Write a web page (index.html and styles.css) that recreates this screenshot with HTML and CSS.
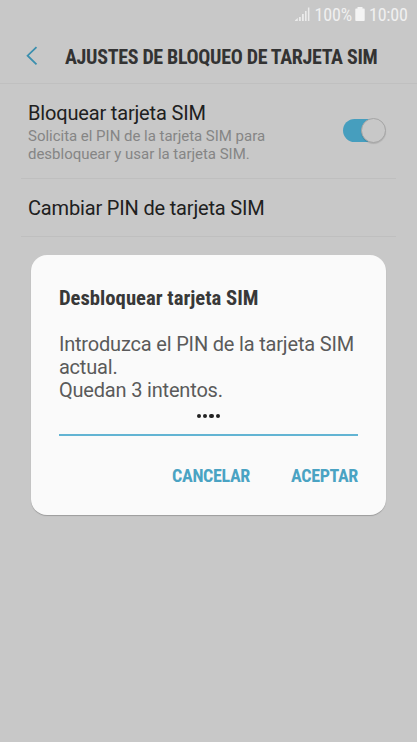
FILE: index.html
```html
<!DOCTYPE html>
<html lang="es">
<head>
<meta charset="utf-8">
<title>Ajustes de bloqueo de tarjeta SIM</title>
<link rel="stylesheet" href="styles.css">
</head>
<body>
<div class="screen">
  <div class="status">
    <svg class="signal" width="15" height="15" viewBox="0 0 15 15"><path d="M0 14V13.2L2.8 11V14ZM4 10h1.8v4H4zM7 7h1.8v7H7zM10 4h1.6v10H10zM12.9 .5h1.5V14h-1.5z"/></svg>
    <span class="percent">100%</span>
    <svg class="battery" width="10" height="14" viewBox="0 0 10 14"><path d="M2.5 0h5v1.5H9q.7 0 .7.7v11q0 .7-.7.7H1q-.7 0-.7-.7v-11q0-.7.7-.7h1.5z"/></svg>
    <span class="clock">10:00</span>
  </div>
  <header class="header">
    <svg class="back" width="12" height="20" viewBox="0 0 12 20"><path d="M10.5 1.2 1.6 9.7l8.9 8.7"/></svg>
    <h1 class="title">AJUSTES DE BLOQUEO DE TARJETA SIM</h1>
  </header>
  <main class="list">
    <div class="row lock-row">
      <div>
        <div class="name lock-name">Bloquear tarjeta SIM</div>
        <div class="summary">Solicita el PIN de la tarjeta SIM para<br>desbloquear y usar la tarjeta SIM.</div>
      </div>
      <div class="switch"><div class="thumb"></div></div>
    </div>
    <div class="row pin-row"><div class="name">Cambiar PIN de tarjeta SIM</div></div>
  </main>
  <section class="dialog">
    <h2 class="dialog-title">Desbloquear tarjeta SIM</h2>
    <p class="message">Introduzca el PIN de la tarjeta SIM<br>actual.<br>Quedan 3 intentos.</p>
    <div class="field"><i class="dot"></i><i class="dot"></i><i class="dot"></i><i class="dot"></i></div>
    <div class="actions"><span class="cancel">CANCELAR</span><span class="accept">ACEPTAR</span></div>
  </section>
</div>
</body>
</html>
```
FILE: styles.css
```css
* { box-sizing: border-box; }
body { margin: 0; background: #c8c8c8; font-family: Roboto, sans-serif; }
.screen { width: 417px; height: 742px; overflow: hidden; background: #c8c8c8; }
.status { height: 30px; display: flex; align-items: flex-start; padding: 7px 0 0 295px; color: #f0f0f0; font-size: 18px; line-height: 15px; white-space: nowrap; }
.status svg { fill: #f4f4f4; flex: none; }
.signal { opacity: .8; }
.percent { width: 45px; padding-left: 4.5px; font-stretch: condensed; letter-spacing: -.1px; }
.clock { padding-left: 4px; font-stretch: condensed; letter-spacing: -.2px; }
.header { height: 54px; display: flex; align-items: center; padding: 0 0 2px 26px; border-bottom: 1px solid #c0c0c0; }
.back { fill: none; stroke: #3b8fae; stroke-width: 1.8; }
.title { margin: 2px 0 0 27px; font-family: "Roboto Condensed", Roboto; font-stretch: condensed; font-size: 20px; line-height: 24px; font-weight: 700; letter-spacing: -.33px; color: #333; white-space: nowrap; }
.list { padding: 0 21px; }
.row { border-bottom: 1px solid #bfbfbf; padding-left: 7px; display: flex; justify-content: space-between; white-space: nowrap; }
.lock-row { height: 95px; padding-top: 17px; padding-right: 10px; }
.name { font-size: 20px; line-height: 24px; letter-spacing: -.17px; color: #202020; }
.summary { margin-top: 3px; font-size: 15px; line-height: 17.5px; letter-spacing: -.02px; color: #858585; }
.pin-row { height: 58px; padding-top: 17px; }
.switch { width: 43.5px; height: 23px; margin-top: 18px; border-radius: 12px; background: linear-gradient(90deg, #469ebe 32px, transparent 32px); display: flex; justify-content: flex-end; align-items: center; }
.thumb { width: 25px; height: 25px; flex: none; border-radius: 50%; background: #c8c8c8; border: 1px solid #a5a5a5; box-shadow: 0 1px 1px rgba(0,0,0,.12); }
.dialog { width: 354.5px; height: 260px; margin: 18px 0 0 31.2px; padding: 31px 27.7px 0; border-radius: 16px; background: #fafafa; box-shadow: 0 1px 1px rgba(0,0,0,.22); white-space: nowrap; }
.dialog-title { margin: 0; font-family: "Roboto Condensed", Roboto; font-stretch: condensed; font-size: 20.7px; line-height: 24px; color: #383838; }
.message { margin: 23px 0 0; font-size: 20px; line-height: 23.2px; letter-spacing: -.18px; color: #5a5a5a; }
.field { height: 33.4px; display: flex; justify-content: center; gap: 2px; padding-top: 11px; border-bottom: 2px solid #62b4d3; }
.dot { width: 4.4px; height: 4.4px; border-radius: 50%; background: #222; }
.actions { display: flex; justify-content: flex-end; gap: 41px; margin-top: 29px; font-family: "Roboto Condensed", Roboto; font-stretch: condensed; font-size: 18px; line-height: 22px; font-weight: 700; letter-spacing: -.33px; color: #4aa3c3; }
```
